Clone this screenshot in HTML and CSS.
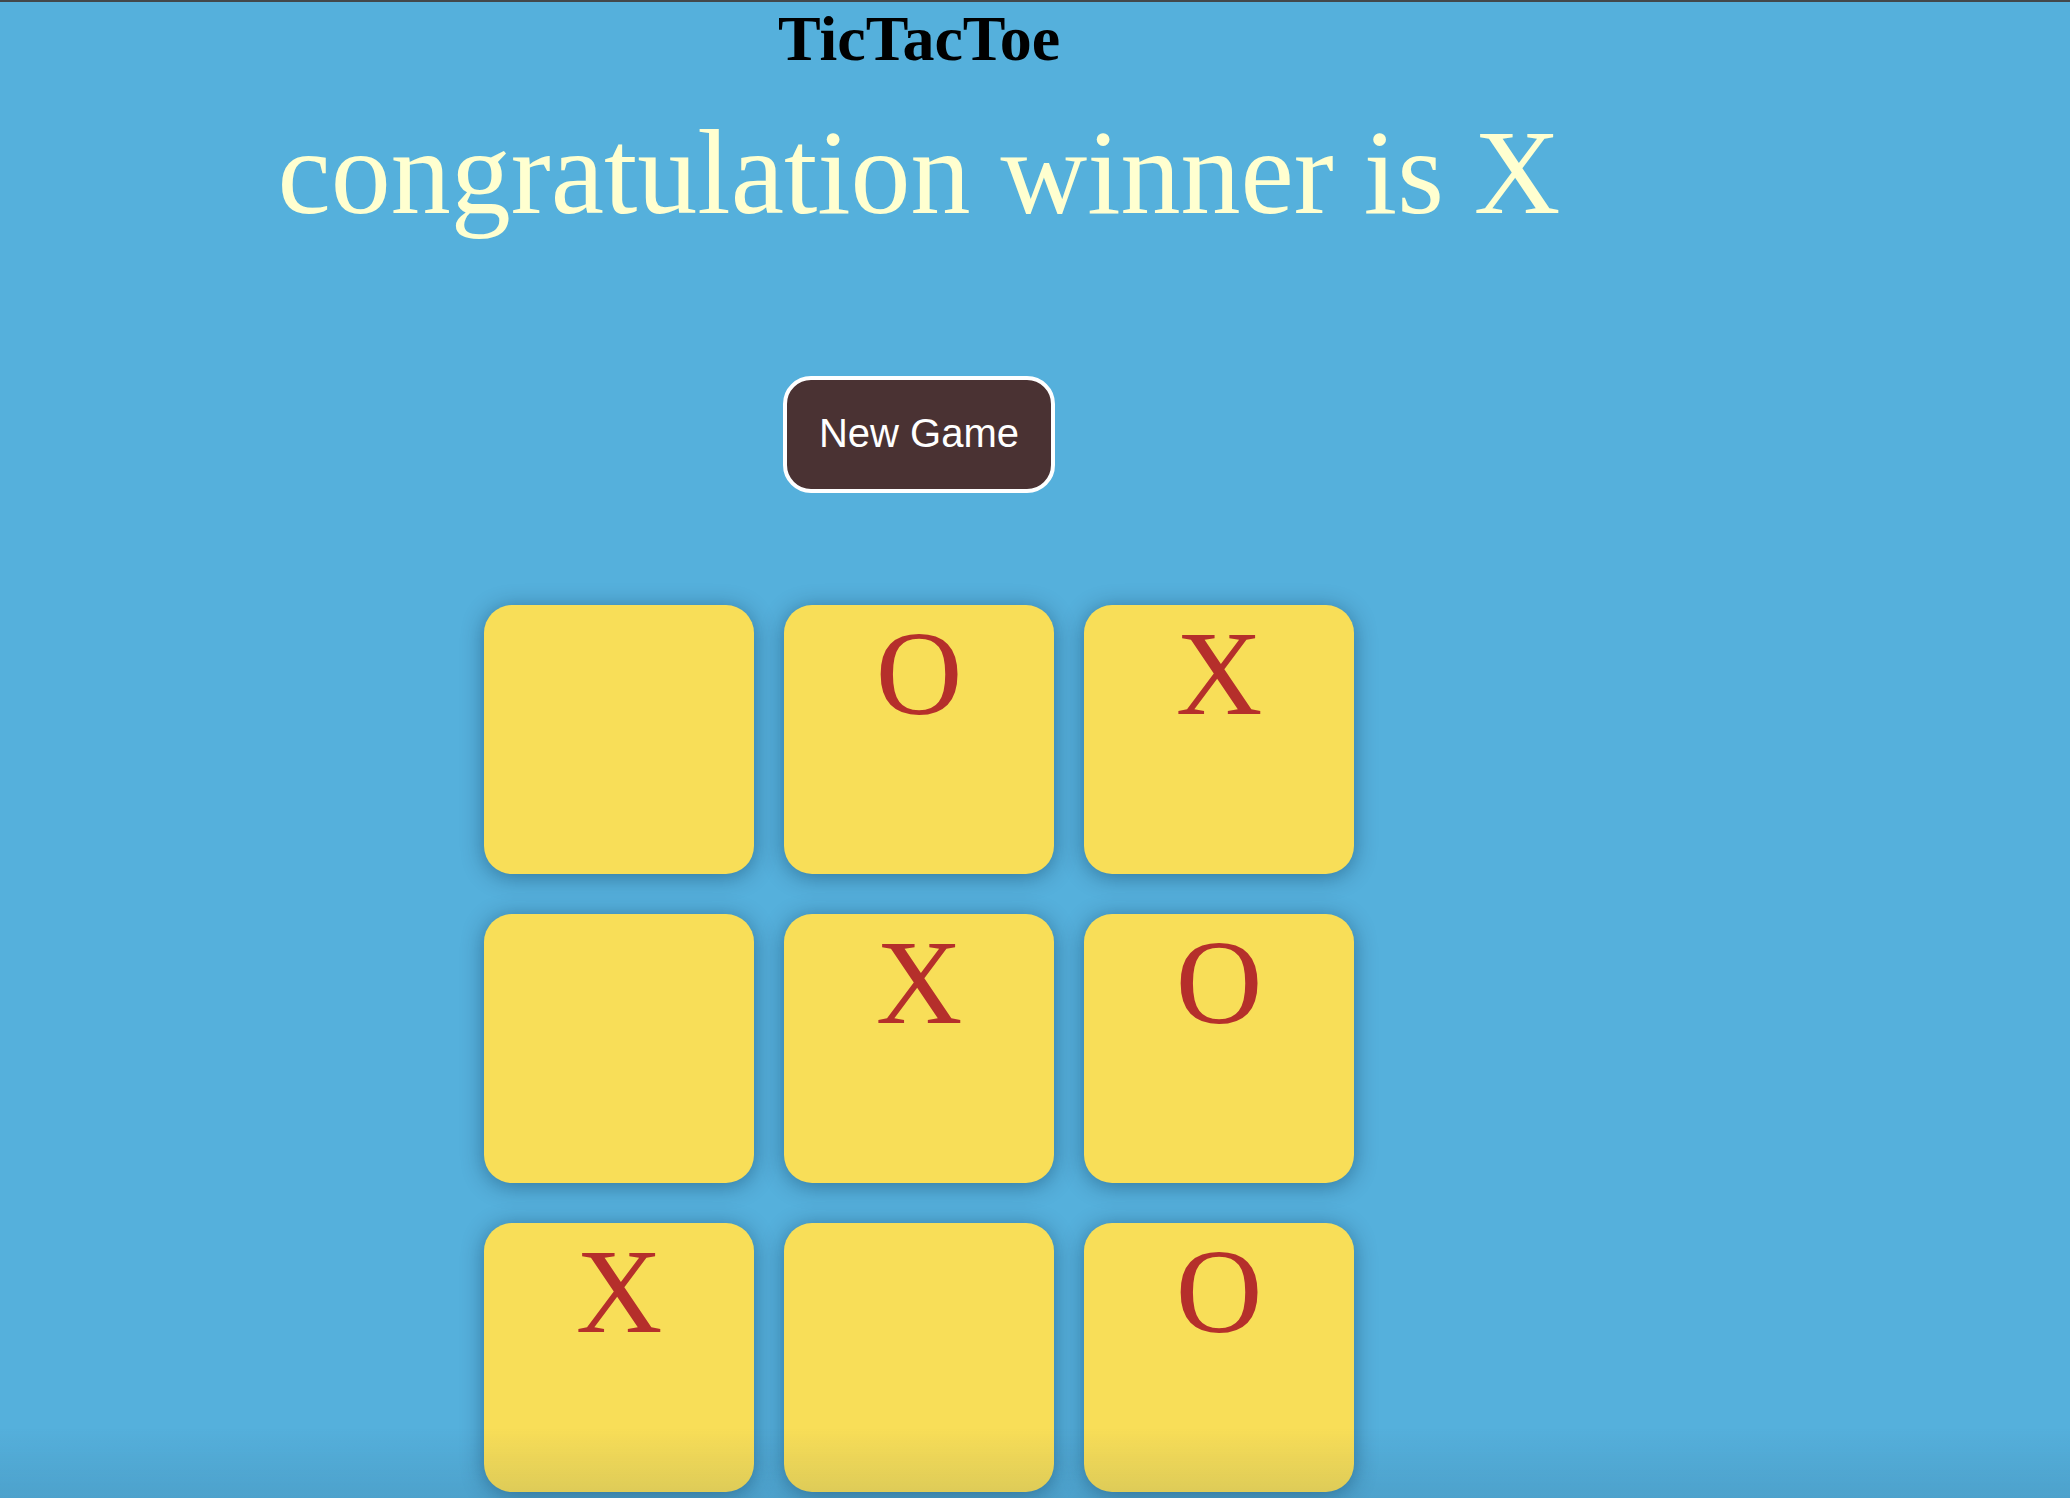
FILE: index.html
```html
<!DOCTYPE html>
<html lang="en">
<head>
<meta charset="utf-8">
<title>TicTacToe</title>
<link rel="stylesheet" href="styles.css">
</head>
<body>
<main class="app">
  <h1 class="title">TicTacToe</h1>
  <p class="message">congratulation winner is X</p>
  <button class="new-game">New Game</button>
  <div class="board">
    <button class="cell"></button>
    <button class="cell">O</button>
    <button class="cell">X</button>
    <button class="cell"></button>
    <button class="cell">X</button>
    <button class="cell">O</button>
    <button class="cell">X</button>
    <button class="cell"></button>
    <button class="cell">O</button>
  </div>
</main>
<div class="bottom-fade"></div>
</body>
</html>
```
FILE: styles.css
```css
html, body {
  height: 100%;
}
body {
  margin: 0;
  border-top: 2px solid #43484b;
  background: #55b0dc;
  overflow: hidden;
  box-sizing: border-box;
}
.app {
  width: 1838px;
  display: flex;
  flex-direction: column;
  align-items: center;
}
.title {
  margin: 0;
  font-family: "Liberation Serif", "Times New Roman", serif;
  font-weight: 700;
  font-size: 64px;
  line-height: 74px;
  color: #000;
}
.message {
  margin: 28px 0 0;
  font-family: "Liberation Serif", "Times New Roman", serif;
  font-size: 120px;
  line-height: 138px;
  color: #ffffd0;
}
.new-game {
  margin-top: 134px;
  width: 272px;
  height: 117px;
  box-sizing: border-box;
  border: 4px solid #ffffff;
  border-radius: 28px;
  background: #4a3233;
  color: #ffffff;
  font-family: "Liberation Sans", Arial, sans-serif;
  font-size: 40px;
  line-height: 46px;
  padding: 0 0 3px;
  display: flex;
  align-items: center;
  justify-content: center;
  cursor: pointer;
}
.board {
  margin-top: 112px;
  display: grid;
  grid-template-columns: repeat(3, 270px);
  grid-auto-rows: 269px;
  column-gap: 30px;
  row-gap: 40px;
}
.cell {
  border: none;
  border-radius: 28px;
  background: #f8de58;
  box-shadow: 0 3px 22px rgba(0, 35, 65, 0.42);
  color: #b52f2b;
  font-family: "Liberation Serif", "Times New Roman", serif;
  font-size: 120px;
  line-height: 138px;
  padding: 0;
  display: flex;
  justify-content: center;
  align-items: flex-start;
  cursor: pointer;
}
.bottom-fade {
  position: fixed;
  left: 0;
  right: 0;
  bottom: 0;
  height: 70px;
  background: linear-gradient(to bottom, rgba(20, 60, 90, 0) 0%, rgba(20, 60, 90, 0.12) 100%);
  pointer-events: none;
}
```
